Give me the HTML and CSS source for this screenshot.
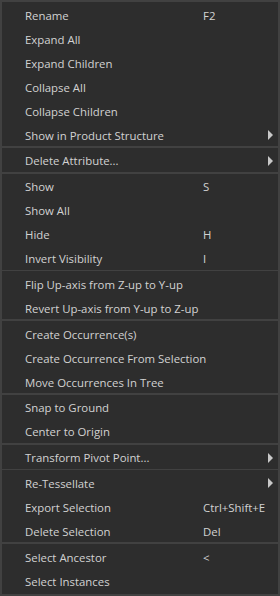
FILE: index.html
```html
<!DOCTYPE html>
<html lang="en">
<head>
    <meta charset="UTF-8">
    <meta name="viewport" content="width=device-width, initial-scale=1.0">
    <title>Context Menu</title>
    <link rel="stylesheet" href="styles.css">
</head>
<body>
    <!-- Tree context menu -->
    <ul class="menu">
        <li class="item"><span class="label">Rename</span><span class="shortcut">F2</span></li>
        <li class="item"><span class="label">Expand All</span></li>
        <li class="item"><span class="label">Expand Children</span></li>
        <li class="item"><span class="label">Collapse All</span></li>
        <li class="item"><span class="label">Collapse Children</span></li>
        <li class="item"><span class="label">Show in Product Structure</span><span class="arrow"></span></li>
        <li class="sep"></li>
        <li class="item"><span class="label">Delete Attribute...</span><span class="arrow"></span></li>
        <li class="sep"></li>
        <li class="item"><span class="label">Show</span><span class="shortcut">S</span></li>
        <li class="item"><span class="label">Show All</span></li>
        <li class="item"><span class="label">Hide</span><span class="shortcut">H</span></li>
        <li class="item"><span class="label">Invert Visibility</span><span class="shortcut">I</span></li>
        <li class="sep"></li>
        <li class="item"><span class="label">Flip Up-axis from Z-up to Y-up</span></li>
        <li class="item"><span class="label">Revert Up-axis from Y-up to Z-up</span></li>
        <li class="sep"></li>
        <li class="item"><span class="label">Create Occurrence(s)</span></li>
        <li class="item"><span class="label">Create Occurrence From Selection</span></li>
        <li class="item"><span class="label">Move Occurrences In Tree</span></li>
        <li class="sep"></li>
        <li class="item"><span class="label">Snap to Ground</span></li>
        <li class="item"><span class="label">Center to Origin</span></li>
        <li class="sep"></li>
        <li class="item"><span class="label">Transform Pivot Point...</span><span class="arrow"></span></li>
        <li class="sep"></li>
        <li class="item"><span class="label">Re-Tessellate</span><span class="arrow"></span></li>
        <li class="item"><span class="label">Export Selection</span><span class="shortcut">Ctrl+Shift+E</span></li>
        <li class="item"><span class="label">Delete Selection</span><span class="shortcut">Del</span></li>
        <li class="sep"></li>
        <li class="item"><span class="label">Select Ancestor</span><span class="shortcut">&lt;</span></li>
        <li class="item"><span class="label">Select Instances</span></li>
    </ul>
</body>
</html>
```

FILE: styles.css
```css
body {
    margin: 0;
    padding: 0;
    background-color: #2d2d2d;
    font-family: "Open Sans", "Noto Sans", sans-serif;
}
.menu {
    list-style: none;
    margin: 0;
    padding: 0;
    width: 280px;
    height: 596px;
    box-sizing: border-box;
    background-color: #2d2d2d;
    border: 2px solid #414141;
    overflow: hidden;
}
.item {
    display: flex;
    align-items: center;
    height: 24px;
    box-sizing: border-box;
    padding-top: 2px;
    padding-left: 23px;
    font-size: 11.4px;
    color: #d2d2d2;
    white-space: nowrap;
}
.label {
    width: 178px;
    flex-shrink: 0;
}
.shortcut {
    flex: 1;
}
.arrow {
    margin-left: auto;
    margin-right: 5px;
    width: 0;
    height: 0;
    border-top: 5px solid transparent;
    border-bottom: 5px solid transparent;
    border-left: 5px solid #c8c8c8;
}
.sep {
    height: 1.78px;
    background-color: #414141;
}
```
